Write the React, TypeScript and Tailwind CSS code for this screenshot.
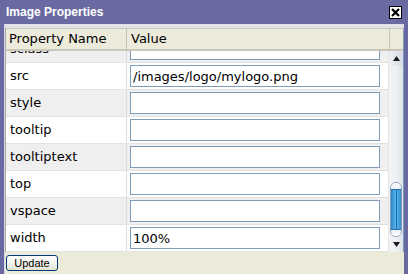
import React from "react";

interface Row {
  name: string;
  value: string;
}

const rows: Row[] = [
  { name: "sclass", value: "" },
  { name: "src", value: "/images/logo/mylogo.png" },
  { name: "style", value: "" },
  { name: "tooltip", value: "" },
  { name: "tooltiptext", value: "" },
  { name: "top", value: "" },
  { name: "vspace", value: "" },
  { name: "width", value: "100%" },
];

function CloseButton() {
  return (
    <div className="w-[13px] h-[13px] bg-white border border-black flex items-center justify-center">
      <svg width="9" height="9" viewBox="0 0 9 9">
        <path d="M1 1 L8 8 M8 1 L1 8" stroke="#000" strokeWidth="2.2" />
      </svg>
    </div>
  );
}

function PropRow({ name, value, index }: Row & { index: number }) {
  const gray = index % 2 === 0;
  return (
    <div
      className={`flex h-[27px] shrink-0 border-b border-[#e2e2e2] ${
        gray ? "bg-[#efefef]" : "bg-white"
      }`}
    >
      <div className="w-[121px] shrink-0 border-r border-[#dcdcdc] flex items-center pl-[4px] text-[13px] text-black">
        {name}
      </div>
      <div className="flex-1 flex items-center pl-[3px]">
        <input
          readOnly
          value={value}
          className="w-[250px] h-[22px] border border-[#7f9db9] bg-white px-[2px] text-[13px] text-black outline-none"
          style={{ fontFamily: '"DejaVu Sans", sans-serif' }}
        />
      </div>
    </div>
  );
}

function Scrollbar() {
  return (
    <div className="w-[15px] shrink-0 flex flex-col bg-gradient-to-r from-[#f3f3f6] via-[#eef0f4] to-[#dfe3ea] border-l border-[#e6e6e6]">
      <div className="h-[15px] flex items-center justify-center bg-gradient-to-r from-[#eef0f4] to-[#d6dce6]">
        <svg width="7" height="5" viewBox="0 0 7 5">
          <path d="M3.5 0 L7 5 L0 5 Z" fill="#1a1a1a" />
        </svg>
      </div>
      <div className="flex-1 flex flex-col justify-end px-[1px]">
        <div className="h-[55px] rounded-[6px] border border-[#8a9cb4] bg-white flex flex-col overflow-hidden">
          <div className="h-[6px] bg-gradient-to-b from-white to-[#e8eef6]" />
          <div className="flex-1 bg-gradient-to-r from-[#2a86c8] via-[#5ab8ec] to-[#2f8fd0] flex justify-center border-y border-[#2b6ea8]">
            <div className="w-[1px] bg-[#1f6aa8]" />
          </div>
          <div className="h-[6px] bg-gradient-to-t from-white to-[#e8eef6]" />
        </div>
      </div>
      <div className="h-[15px] flex items-center justify-center">
        <svg width="7" height="5" viewBox="0 0 7 5">
          <path d="M0 0 L7 0 L3.5 5 Z" fill="#1a1a1a" />
        </svg>
      </div>
    </div>
  );
}

export default function App() {
  return (
    <div
      className="w-[408px] h-[274px] bg-[#6a6aa2] flex flex-col overflow-hidden"
      style={{ fontFamily: '"DejaVu Sans", sans-serif' }}
    >
      <div className="h-[24px] shrink-0 flex items-center justify-between pl-[6px] pr-[6px]">
        <span
          className="text-white font-bold text-[12px]"
          style={{ fontFamily: '"Liberation Sans", Arial, sans-serif' }}
        >
          Image Properties
        </span>
        <CloseButton />
      </div>
      <div className="flex-1 mx-[4px] bg-[#ecead9] flex flex-col border-l border-[#d8d6e4]">
        <div className="h-[4px] shrink-0 bg-[#e3e2e8]" />
        <div className="h-[224px] shrink-0 flex flex-col border-l border-[#a9a9a9] border-r border-r-[#7f9db9] border-t border-t-[#c9c7c0] bg-white">
          <div className="h-[22px] shrink-0 flex bg-[#ebeadb] border-b-2 border-[#cbc7b8] text-[13px] text-black">
            <div className="w-[121px] shrink-0 border-r border-[#c5c2b2] flex items-center pl-[3px]">
              Property Name
            </div>
            <div className="flex-1 flex items-center pl-[4px] border-r border-[#c5c2b2]">Value</div>
            <div className="w-[13px] shrink-0" />
          </div>
          <div className="flex-1 flex overflow-hidden">
            <div className="flex-1 flex flex-col overflow-hidden">
              <div className="flex flex-col mt-[-15px]">
                {rows.map((r, i) => (
                  <PropRow key={r.name} {...r} index={i} />
                ))}
              </div>
            </div>
            <Scrollbar />
          </div>
        </div>
        <div className="flex-1 flex items-center pl-[1px]">
          <button
            className="w-[52px] h-[16px] rounded-[3px] border border-[#003c74] bg-gradient-to-b from-white to-[#e6e4d8] text-[11px] text-black leading-none"
            style={{ fontFamily: '"Liberation Sans", Arial, sans-serif' }}
          >
            Update
          </button>
        </div>
      </div>
    </div>
  );
}
